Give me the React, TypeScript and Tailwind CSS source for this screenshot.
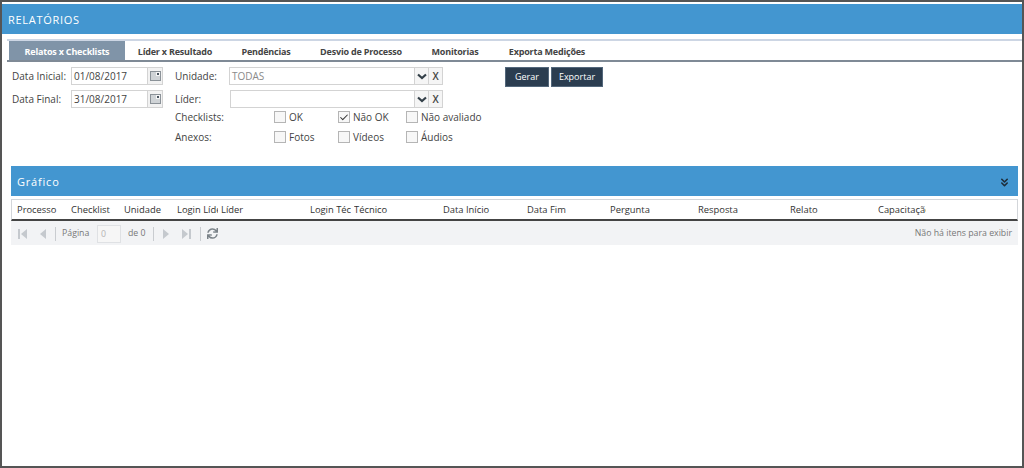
import { FC } from "react";
import { ChevronsDown, Check } from "lucide-react";
import { FaSync } from "react-icons/fa";

const tabs = ["Relatos x Checklists", "Líder x Resultado", "Pendências", "Desvio de Processo", "Monitorias", "Exporta Medições"];
const tabWidths = ["w-[116px]", "w-[100px]", "w-[82px]", "w-[108px]", "w-[80px]", "w-[104px]"];

const columns = [
  { label: "Processo", width: "w-[54px]" },
  { label: "Checklist", width: "w-[53px]" },
  { label: "Unidade", width: "w-[53px]" },
  { label: "Login Líder", width: "w-[44px]" },
  { label: "Líder", width: "w-[89px]" },
  { label: "Login Técnico", width: "w-[44px]" },
  { label: "Técnico", width: "w-[89px]" },
  { label: "Data Início", width: "w-[84px]" },
  { label: "Data Fim", width: "w-[83px]" },
  { label: "Pergunta", width: "w-[88px]" },
  { label: "Resposta", width: "w-[92px]" },
  { label: "Relato", width: "w-[88px]" },
  { label: "Capacitação", width: "w-[51px]" },
];

const DateField: FC<{ label: string; value: string }> = ({ label, value }) => (
  <div className="flex h-[18px] items-center">
    <span className="w-[59px] shrink-0 whitespace-nowrap">{label}</span>
    <div className="flex h-[18px] w-[92px] border border-[#d3d3d3] bg-white">
      <span className="flex-1 pl-[2px] leading-[16px]">{value}</span>
      <span className="flex w-[15px] items-center justify-center border-l border-[#d3d3d3] bg-[#f2f2f2]">
        <svg width="11" height="10" viewBox="0 0 11 10">
          <rect x="0.5" y="0.5" width="10" height="9" fill="#cfd3d6" stroke="#8b9298" />
          <rect x="6" y="1" width="4" height="4" fill="#f5f5f5" />
          <rect x="7" y="2" width="2" height="2" fill="#4a5560" />
        </svg>
      </span>
    </div>
  </div>
);

const ComboField: FC<{ label: string; value?: string; labelWidth: string; inputWidth: string }> = ({ label, value, labelWidth, inputWidth }) => (
  <div className="flex h-[18px] items-center">
    <span className={`${labelWidth} shrink-0`}>{label}</span>
    <div className={`flex h-[18px] ${inputWidth} border border-[#d3d3d3] bg-white`}>
      <span className="flex-1 pl-[2px] leading-[16px] text-[#8a8a8a]">{value}</span>
      <span className="flex w-[14px] items-center justify-center border-l border-[#d3d3d3] bg-[#f5f5f5]">
        <svg width="10" height="7" viewBox="0 0 10 7">
          <path d="M1 1.5 L5 5 L9 1.5" fill="none" stroke="#333f48" strokeWidth="2.2" />
        </svg>
      </span>
      <span className="flex w-[14px] items-center justify-center border-l border-[#d3d3d3] bg-[#f5f5f5] text-[10px] font-semibold text-[#444]">
        X
      </span>
    </div>
  </div>
);

const CheckItem: FC<{ label: string; width: string; checked?: boolean }> = ({ label, width, checked }) => (
  <label className={`flex ${width} items-center gap-[3px] whitespace-nowrap`}>
    <span className="flex h-[12px] w-[12px] items-center justify-center border border-[#b5b5b5] bg-[#f7f7f7]">
      {checked && <Check size={11} strokeWidth={2.5} className="text-[#333]" />}
    </span>
    <span>{label}</span>
  </label>
);

const CheckRow: FC<{ label: string; items: { label: string; checked?: boolean }[] }> = ({ label, items }) => (
  <div className="flex h-[18px] items-center">
    <span className="w-[99px] shrink-0">{label}</span>
    <CheckItem label={items[0].label} width="w-[64px]" checked={items[0].checked} />
    <CheckItem label={items[1].label} width="w-[68px]" checked={items[1].checked} />
    <CheckItem label={items[2].label} width="w-[80px]" checked={items[2].checked} />
  </div>
);

const Sep: FC<{ className: string }> = ({ className }) => <span className={`h-[14px] w-px bg-[#c9ccd0] ${className}`} />;

const PagerEdge: FC<{ flip?: boolean }> = ({ flip }) => (
  <svg width="9" height="10" viewBox="0 0 9 10" className={flip ? "ml-[13px] rotate-180" : ""}>
    <rect x="0" y="0" width="2" height="10" fill="#c5c9ce" />
    <path d="M9 0 V10 L3 5 Z" fill="#c5c9ce" />
  </svg>
);

export default function App() {
  return (
    <div className="h-[468px] w-[1024px] overflow-hidden border-2 border-[#555] bg-white pt-[2px] font-['Open_Sans',sans-serif] text-[10px] text-[#444]">
      <div className="flex h-[30px] items-center bg-[#4396d0] pl-[6px] pt-[2px] text-[11px] tracking-[0.7px] text-white">RELATÓRIOS</div>

      <div className="ml-[5px] mt-[5px] flex h-[23px] border-y-2 border-t-[#cdd6e4] border-b-[#7f8a96] pl-[2px]">
        {tabs.map((tab, i) => (
          <div
            key={tab}
            className={`flex ${tabWidths[i]} items-center justify-center pt-[3px] text-[9px] font-bold tracking-[-0.2px] ${i === 0 ? "bg-[#8094a8] text-white" : "text-[#444]"}`}
          >
            {tab}
          </div>
        ))}
      </div>

      <div className="flex pl-[10px] pt-[5px]">
        <div className="flex w-[163px] flex-col gap-[5px]">
          <DateField label="Data Inicial:" value="01/08/2017" />
          <DateField label="Data Final:" value="31/08/2017" />
        </div>
        <div className="flex w-[330px] flex-col">
          <div className="flex flex-col gap-[5px]">
            <ComboField label="Unidade:" value="TODAS" labelWidth="w-[54px]" inputWidth="w-[214px]" />
            <ComboField label="Líder:" labelWidth="w-[55px]" inputWidth="w-[213px]" />
          </div>
          <div className="flex flex-col gap-[2px]">
            <CheckRow label="Checklists:" items={[{ label: "OK" }, { label: "Não OK", checked: true }, { label: "Não avaliado" }]} />
            <CheckRow label="Anexos:" items={[{ label: "Fotos" }, { label: "Vídeos" }, { label: "Áudios" }]} />
          </div>
        </div>
        <div className="flex h-[20px] gap-[2px]">
          <button className="h-[20px] w-[44px] border border-[#53677b] bg-[#2b3d50] text-[9px] text-white">Gerar</button>
          <button className="h-[20px] w-[52px] border border-[#53677b] bg-[#2b3d50] text-[9px] text-white">Exportar</button>
        </div>
      </div>

      <div className="ml-[9px] mr-[4px] mt-[20px]">
        <div className="flex h-[30px] items-center justify-between bg-[#4396d0] pl-[6px] pr-[7px] pt-[2px] text-[11px] tracking-[0.8px] text-white">
          <span>Gráfico</span>
          <ChevronsDown size={13} strokeWidth={3} className="text-[#1f2d3a]" />
        </div>
        <div className="mt-[3px] flex h-[22px] items-center border-x border-t border-[#d3d6da] border-b-2 border-b-[#444] pl-[5px] pt-[1px] text-[9.4px] text-[#333]">
          {columns.map((col) => (
            <div key={col.label} className={`${col.width} shrink-0 pr-[3px]`}>
              <div className="overflow-hidden whitespace-nowrap">{col.label}</div>
            </div>
          ))}
        </div>
        <div className="flex h-[24px] items-center justify-between bg-[#f2f3f5] pl-[7px] pr-[6px] pt-[1px] text-[8.75px] text-[#777]">
          <div className="flex items-center">
            <PagerEdge />
            <svg width="6" height="10" viewBox="0 0 6 10" className="ml-[13px]">
              <path d="M6 0 V10 L0 5 Z" fill="#c5c9ce" />
            </svg>
            <Sep className="ml-[9px]" />
            <span className="ml-[6px] w-[29px] whitespace-nowrap">Página</span>
            <span className="ml-[6px] h-[18px] w-[24px] border border-[#dfe1e4] bg-[#f6f6f6] pl-[3px] leading-[16px] text-[#b5b5b5]">0</span>
            <span className="ml-[7px] w-[19px] whitespace-nowrap">de 0</span>
            <Sep className="ml-[6px]" />
            <svg width="6" height="10" viewBox="0 0 6 10" className="ml-[9px]">
              <path d="M0 0 V10 L6 5 Z" fill="#c5c9ce" />
            </svg>
            <PagerEdge flip />
            <Sep className="ml-[9px]" />
            <FaSync size={11} className="ml-[6px] text-[#7a8288]" />
          </div>
          <span>Não há itens para exibir</span>
        </div>
      </div>
    </div>
  );
}
